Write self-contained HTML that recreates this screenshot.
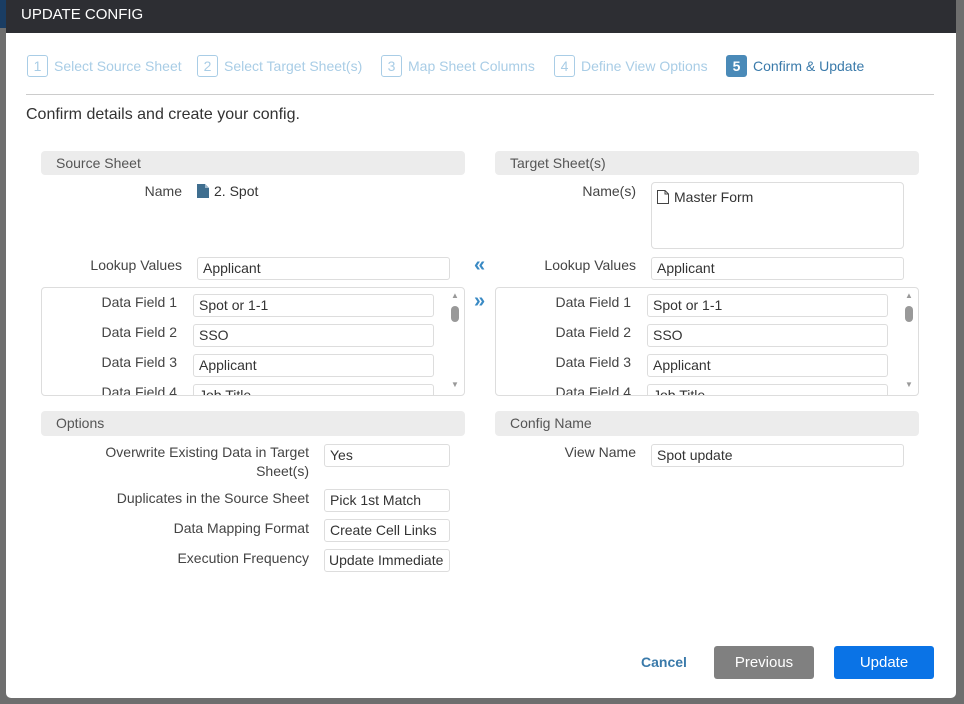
<!DOCTYPE html>
<html><head><style>
*{box-sizing:border-box;margin:0;padding:0}
body{width:964px;height:704px;position:relative;overflow:hidden;background:#6e6e6e;font-family:"Liberation Sans",sans-serif;font-size:14px;color:#444}
.a{position:absolute}
.modal{left:6px;top:0;width:950px;height:698px;background:#fff;border-radius:0 0 5px 5px}
.hdr{left:6px;top:0;width:950px;height:33px;background:#2d2e33;color:#fff;font-size:15px;line-height:30px;padding-left:15px}
.step{top:55px;height:22px;line-height:22px;color:#a9cde6;font-size:14px;white-space:nowrap}
.step b{display:inline-block;width:21px;height:22px;border:1px solid #a9cde6;border-radius:3px;text-align:center;font-weight:normal;margin-right:6px;line-height:20px}
.sh{height:24px;background:#ececec;border-radius:4px;line-height:24px;padding-left:15px;color:#555}
.lbl{text-align:right;white-space:nowrap;line-height:18px}
.inp{height:23px;border:1px solid #ddd;border-radius:3px;padding-left:5px;line-height:21px;color:#333;white-space:nowrap;overflow:hidden}
.box{border:1px solid #ddd;border-radius:4px;overflow:hidden}
.arr{color:#3a8ac4;font-size:20px;font-weight:bold}
</style></head><body>
<div class="a" style="left:0;top:0;width:6px;height:28px;background:#1a3d63"></div>
<div class="a modal"></div>
<div class="a hdr">UPDATE CONFIG</div>

<div class="a step" style="left:27px"><b>1</b>Select Source Sheet</div>
<div class="a step" style="left:197px"><b>2</b>Select Target Sheet(s)</div>
<div class="a step" style="left:381px"><b>3</b>Map Sheet Columns</div>
<div class="a step" style="left:554px"><b>4</b>Define View Options</div>
<div class="a step" style="left:726px;color:#3a7aaa"><b style="background:#4a8ab8;border-color:#4a8ab8;color:#fff;font-weight:bold">5</b>Confirm &amp; Update</div>
<div class="a" style="left:26px;top:94px;width:908px;height:1px;background:#ccc"></div>
<div class="a" style="left:26px;top:106px;font-size:16px;color:#333">Confirm details and create your config.</div>

<div class="a sh" style="left:41px;top:151px;width:424px">Source Sheet</div>
<div class="a sh" style="left:495px;top:151px;width:424px">Target Sheet(s)</div>

<div class="a lbl" style="left:80px;top:182px;width:102px">Name</div>
<svg class="a" style="left:197px;top:184px" width="12" height="14" viewBox="0 0 12 14"><path d="M0 0H8L12 4V14H0Z" fill="#3f6e8f"/><path d="M8 0V4H12" fill="#9db7cc"/></svg>
<div class="a" style="left:214px;top:182px;line-height:18px;color:#333">2. Spot</div>

<div class="a lbl" style="left:530px;top:182px;width:106px">Name(s)</div>
<div class="a box" style="left:651px;top:182px;width:253px;height:67px"></div>
<svg class="a" style="left:657px;top:190px" width="12" height="14" viewBox="0 0 12 14"><path d="M.5 .5H8L11.5 4V13.5H.5Z M8 .5V4H11.5" fill="none" stroke="#444"/></svg>
<div class="a" style="left:674px;top:188px;line-height:18px;color:#333">Master Form</div>

<div class="a lbl" style="left:60px;top:256px;width:122px">Lookup Values</div>
<div class="a inp" style="left:197px;top:257px;width:253px">Applicant</div>
<div class="a lbl" style="left:514px;top:256px;width:122px">Lookup Values</div>
<div class="a inp" style="left:651px;top:257px;width:253px">Applicant</div>
<div class="a arr" style="left:474px;top:254px">«</div>
<div class="a arr" style="left:474px;top:290px">»</div>

<div class="a box" style="left:41px;top:287px;width:424px;height:109px"></div>
<div class="a box" style="left:495px;top:287px;width:424px;height:109px"></div>
<div class="a" style="left:42px;top:288px;width:422px;height:107px;overflow:hidden">
 <div class="a lbl" style="left:40px;top:5px;width:95px">Data Field 1</div><div class="a inp" style="left:151px;top:6px;width:241px">Spot or 1-1</div>
 <div class="a lbl" style="left:40px;top:35px;width:95px">Data Field 2</div><div class="a inp" style="left:151px;top:36px;width:241px">SSO</div>
 <div class="a lbl" style="left:40px;top:65px;width:95px">Data Field 3</div><div class="a inp" style="left:151px;top:66px;width:241px">Applicant</div>
 <div class="a lbl" style="left:40px;top:95px;width:95px">Data Field 4</div><div class="a inp" style="left:151px;top:96px;width:241px">Job Title</div>
 <div class="a" style="left:409px;top:18px;width:8px;height:16px;background:#999;border-radius:4px"></div>
 <div class="a" style="left:409px;top:3px;font-size:8px;color:#999">▲</div>
 <div class="a" style="left:409px;top:92px;font-size:8px;color:#999">▼</div>
</div>
<div class="a" style="left:496px;top:288px;width:422px;height:107px;overflow:hidden">
 <div class="a lbl" style="left:40px;top:5px;width:95px">Data Field 1</div><div class="a inp" style="left:151px;top:6px;width:241px">Spot or 1-1</div>
 <div class="a lbl" style="left:40px;top:35px;width:95px">Data Field 2</div><div class="a inp" style="left:151px;top:36px;width:241px">SSO</div>
 <div class="a lbl" style="left:40px;top:65px;width:95px">Data Field 3</div><div class="a inp" style="left:151px;top:66px;width:241px">Applicant</div>
 <div class="a lbl" style="left:40px;top:95px;width:95px">Data Field 4</div><div class="a inp" style="left:151px;top:96px;width:241px">Job Title</div>
 <div class="a" style="left:409px;top:18px;width:8px;height:16px;background:#999;border-radius:4px"></div>
 <div class="a" style="left:409px;top:3px;font-size:8px;color:#999">▲</div>
 <div class="a" style="left:409px;top:92px;font-size:8px;color:#999">▼</div>
</div>

<div class="a sh" style="left:41px;top:411px;width:424px;height:25px">Options</div>
<div class="a sh" style="left:495px;top:411px;width:424px;height:25px">Config Name</div>

<div class="a lbl" style="left:60px;top:443px;width:249px;line-height:19px">Overwrite Existing Data in Target<br>Sheet(s)</div>
<div class="a inp" style="left:324px;top:444px;width:126px">Yes</div>
<div class="a lbl" style="left:60px;top:489px;width:249px">Duplicates in the Source Sheet</div>
<div class="a inp" style="left:324px;top:489px;width:126px">Pick 1st Match</div>
<div class="a lbl" style="left:60px;top:519px;width:249px">Data Mapping Format</div>
<div class="a inp" style="left:324px;top:519px;width:126px">Create Cell Links</div>
<div class="a lbl" style="left:60px;top:549px;width:249px">Execution Frequency</div>
<div class="a inp" style="left:324px;top:549px;width:126px;padding-left:4px">Update Immediate</div>

<div class="a lbl" style="left:514px;top:443px;width:122px">View Name</div>
<div class="a inp" style="left:651px;top:444px;width:253px">Spot update</div>

<div class="a" style="left:641px;top:654px;color:#3a7aaa;font-weight:bold;font-size:14px">Cancel</div>
<div class="a" style="left:714px;top:646px;width:100px;height:33px;background:#808080;border-radius:3px;color:#fff;text-align:center;line-height:33px;font-size:15px">Previous</div>
<div class="a" style="left:834px;top:646px;width:100px;height:33px;background:#0a73e6;border-radius:3px;color:#fff;text-align:center;line-height:33px;font-size:15px">Update</div>
</body></html>
